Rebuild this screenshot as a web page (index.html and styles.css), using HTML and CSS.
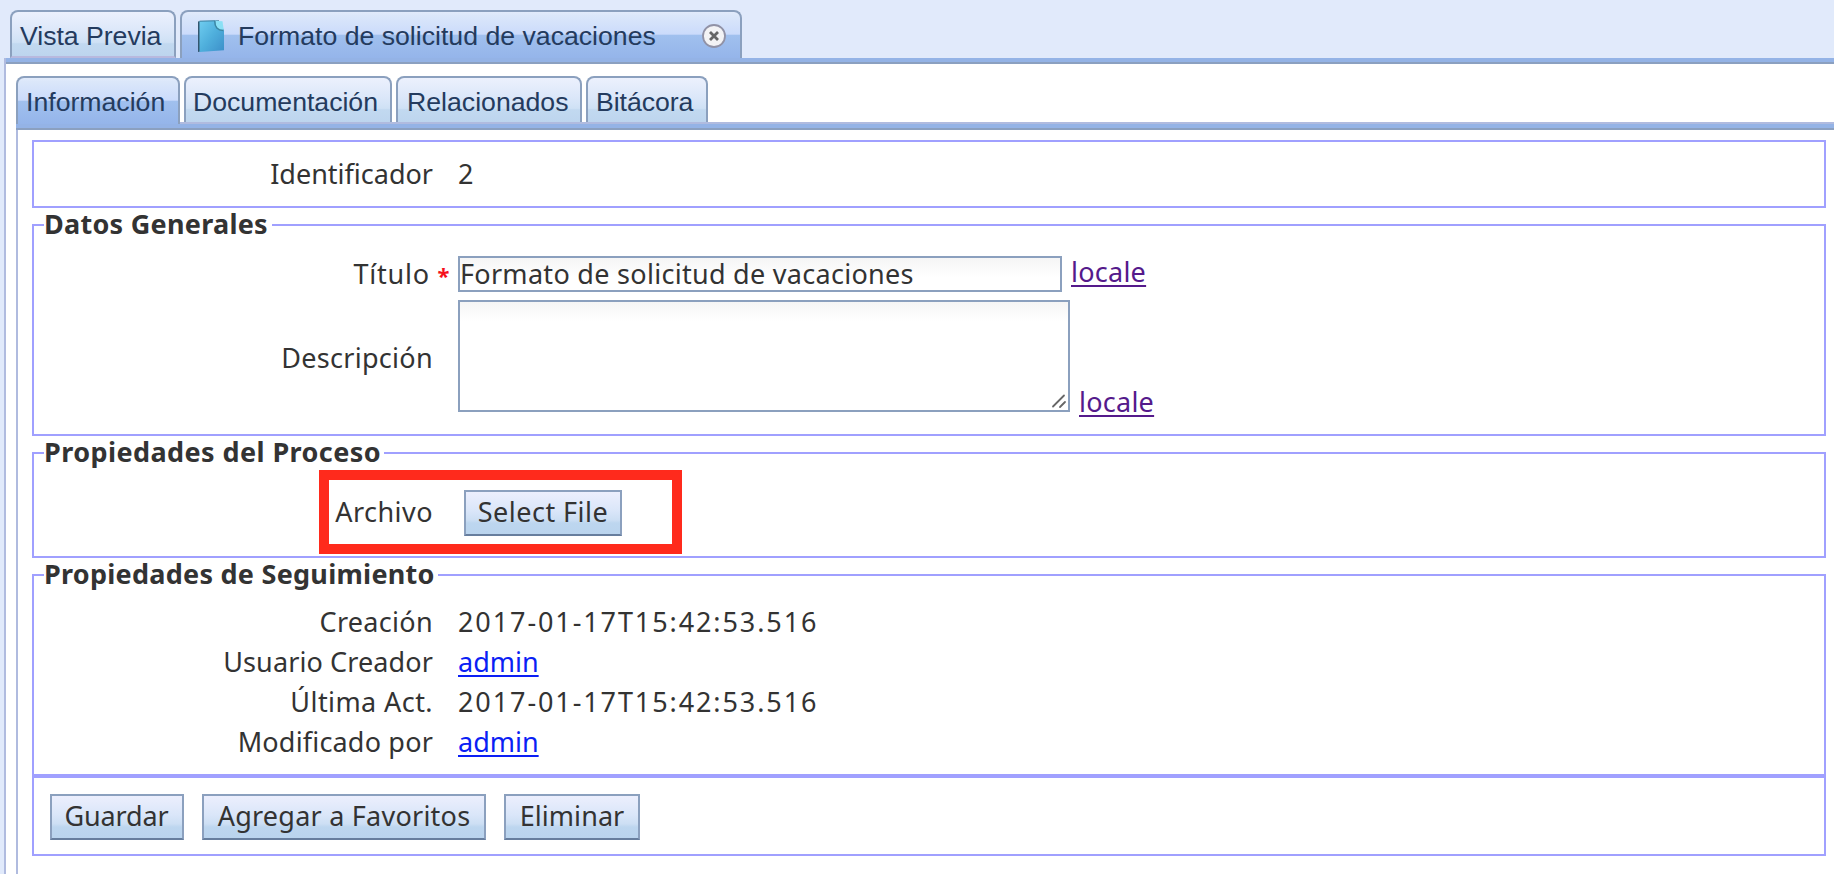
FILE: index.html
```html
<!DOCTYPE html>
<html lang="es">
<head>
<meta charset="utf-8">
<title>Formato de solicitud de vacaciones</title>
<link rel="stylesheet" href="styles.css">
</head>
<body>
<nav class="tabs tabs-outer">
  <div class="tab tab-preview"><span>Vista Previa</span></div>
  <div class="tab tab-document active">
    <svg class="doc-icon" width="28" height="34" viewBox="0 0 28 34">
      <defs><linearGradient id="page" x1="0" y1="0" x2="1" y2="1"><stop offset="0" stop-color="#6fcdf0"/><stop offset=".5" stop-color="#4fafdc"/><stop offset="1" stop-color="#3c8fc9"/></linearGradient></defs>
      <path d="M1 1.5 3.5 1 3.5 31.5 1 32Z" fill="#33566f"/>
      <path d="M2.5 1 18.500.5 27 9.500 27 30.200 2.500 32Z" fill="url(#page)"/>
      <path d="M2.500 1.200 18.500.8 22 .8" fill="none" stroke="#3f7f9f" stroke-width="1"/>
      <path d="M18 .8 25.500 1.200 26.800 10.500Q18 11 18 .8Z" fill="#8be0f5"/>
      <path d="M17.800 1Q17.500 10.300 26.500 10.500" fill="none" stroke="#3b86a3" stroke-width="1.500"/>
    </svg>
    <span>Formato de solicitud de vacaciones</span>
    <svg class="close-icon" width="26" height="26" viewBox="0 0 26 26">
      <circle cx="13" cy="13" r="11" fill="#f3f3f5" stroke="#9192a6" stroke-width="1.800"/>
      <path d="M9 9 17 17M17 9 9 17" stroke="#666" stroke-width="2.800"/>
    </svg>
  </div>
</nav>
<main class="outer-panel">
  <nav class="tabs tabs-inner">
    <div class="tab tab-info active"><span>Información</span></div>
    <div class="tab tab-docs"><span>Documentación</span></div>
    <div class="tab tab-related"><span>Relacionados</span></div>
    <div class="tab tab-log"><span>Bitácora</span></div>
  </nav>
  <form class="inner-panel">
    <fieldset class="box-id">
      <div class="row"><label>Identificador</label><span>2</span></div>
    </fieldset>
    <fieldset class="box-general">
      <legend class="lg-general">Datos Generales</legend>
      <div class="row row-title">
        <label class="required">Título<b>*</b></label>
        <input type="text" value="Formato de solicitud de vacaciones">
        <a class="visited" href="#">locale</a>
      </div>
      <div class="row row-desc">
        <label class="lb-desc">Descripción</label>
        <div class="area-wrap"><textarea></textarea>
          <svg class="grip" width="16" height="16" viewBox="0 0 16 16"><path d="M2 13.500 13 2.500M9 14 14 9" stroke="#666" stroke-width="1.800" stroke-linecap="round"/></svg>
        </div>
        <a class="visited" href="#">locale</a>
      </div>
    </fieldset>
    <fieldset class="box-process">
      <legend class="lg-process">Propiedades del Proceso</legend>
      <div class="row row-file">
        <label class="lb-file">Archivo</label>
        <button type="button" class="btn-file">Select File</button>
      </div>
      <div class="highlight"></div>
    </fieldset>
    <fieldset class="box-tracking">
      <legend class="lg-tracking">Propiedades de Seguimiento</legend>
      <div class="row"><label class="lb-created">Creación</label><span class="date">2017-01-17T15:42:53.516</span></div>
      <div class="row"><label class="lb-creator">Usuario Creador</label><a href="#">admin</a></div>
      <div class="row"><label class="lb-updated">Última Act.</label><span class="date">2017-01-17T15:42:53.516</span></div>
      <div class="row"><label class="lb-modifier">Modificado por</label><a href="#">admin</a></div>
    </fieldset>
    <fieldset class="box-actions">
      <button type="button" class="btn-save">Guardar</button>
      <button type="button" class="btn-fav">Agregar a Favoritos</button>
      <button type="button" class="btn-del">Eliminar</button>
    </fieldset>
  </form>
</main>
</body>
</html>
```
FILE: styles.css
```css
* { box-sizing: border-box; }
html, body { height: 100%; }
body {
  margin: 0;
  display: flex;
  flex-direction: column;
  overflow: hidden;
  background: #e1eafb;
  color: #333;
  font: 27px/40px "Noto Sans", sans-serif;
}

/* Tabs */
.tabs { display: flex; flex: none; align-items: flex-start; gap: 4px; }
.tabs-outer { height: 58px; padding: 10px 0 0 10px; }
.tabs-inner {
  height: 54px;
  margin-top: 12px;
  margin-left: 10px;
  background: linear-gradient(#b0bbdf, #b0bbdf) 0 46px / 100% 2px no-repeat,
    linear-gradient(#94b3e6, #94b3e6) 0 48px / 100% 4px no-repeat,
    linear-gradient(#8ba0c0, #8ba0c0) 0 52px / 100% 2px no-repeat;
}
.tab {
  display: flex;
  height: 48px;
  border: 2px solid #8ba0be;
  border-bottom: 2px solid #b8b9de;
  border-radius: 8px 8px 0 0;
  background: linear-gradient(#ecf1fd 0%, #dbe7f9 45%, #cfe1f5 69%, #c2d9f0 72%, #bdd5ee 100%);
  color: #243b5e;
  font: 26.67px/48px "Liberation Sans", Arial, sans-serif;
  white-space: nowrap;
  padding-left: 9px;
}
.tab.active {
  border-bottom: 0;
  background: linear-gradient(#e2ebfb 0%, #dbe7fa 8%, #cbdbfb 48%, #a0c0ee 51%, #95b5ea 100%);
}
.tabs-inner .tab { line-height: 49px; }
.tabs-inner .tab:not(.active) { border-bottom: 0; height: 46px; }
.tab-preview { width: 166px; padding-left: 8px; letter-spacing: -.03px; }
.tab-document { width: 562px; padding-left: 15px; }
.doc-icon { flex: none; margin: 8px 13px 0 0; }
.close-icon { margin: 11px 0 0 45px; flex: none; }
.tab-info { width: 164px; padding-left: 8px; }
.tab-docs { width: 208px; padding-left: 7px; letter-spacing: -.02px; }
.tab-related { width: 186px; padding-left: 9px; }
.tab-log { width: 122px; padding-left: 8px; letter-spacing: -.05px; }

/* Panels */
.outer-panel {
  flex: 1;
  margin-left: 4px;
  border-left: 2px solid #b0bbdf;
  background: linear-gradient(#94b3e6 4px, #8ba0c0 4px, #8ba0c0 6px, #fff 6px);
  padding-top: 6px;
  display: flex;
  flex-direction: column;
}
.inner-panel {
  flex: 1;
  margin-left: 10px;
  border-left: 2px solid #b0bbdf;
  padding: 10px 8px 0 14px;
}

/* Groups */
fieldset { min-width: 0; margin: 0; padding: 0; border: 2px solid #a0a0ff; }
legend {
  height: 32px;
  margin-left: 10px;
  padding: 0;
  font-weight: bold;
  line-height: 29px;
  white-space: nowrap;
}
.box-id { height: 68px; padding-top: 12px; }
.box-general { margin-top: 1px; height: 227px; padding-top: 15px; }
.box-process { margin-top: 1px; height: 121px; padding-top: 21px; position: relative; }
.box-tracking { margin-top: 1px; height: 217px; padding-top: 11px; }
.box-actions { height: 80px; padding: 16px; display: flex; gap: 18px; }
.lg-general { width: 228px; letter-spacing: .27px; }
.lg-process { width: 340px; letter-spacing: .42px; }
.lg-tracking { width: 394px; letter-spacing: .26px; }

/* Rows */
.row { display: flex; height: 40px; align-items: center; white-space: nowrap; }
.row label { flex: none; width: 424px; padding-right: 25px; text-align: right; }
.row label.required { padding-right: 8px; letter-spacing: .8px; }
.required b { display: inline-block; width: 13px; margin-left: 7px; color: #f5101c; font-size: 22px; line-height: 30px; letter-spacing: 0; text-align: center; }
.row-title { height: 36px; }
.row-desc { height: 112px; margin-top: 8px; }
.row-file { height: 46px; }
.row .lb-desc { letter-spacing: .3px; padding-top: 3px; }
.lb-file { letter-spacing: .45px; }
.lb-created { letter-spacing: .31px; }
.lb-creator { letter-spacing: .11px; }
.lb-updated { letter-spacing: .42px; }
.lb-modifier { letter-spacing: .18px; }
.date { letter-spacing: 1.9px; }
.row-file label { line-height: 37px; margin-top: -3px; }

a { color: #0b1ff5; text-decoration-thickness: 2px; text-underline-offset: 3px; text-decoration-skip-ink: none; }
a.visited { color: #551a8b; letter-spacing: .25px; margin-left: 9px; }
.row-title .visited { margin-top: -4px; }
.row-desc .visited { align-self: flex-end; line-height: 21px; }

input, textarea {
  display: block;
  margin: 0;
  border: 2px solid #8ba0be;
  border-radius: 0;
  background: linear-gradient(#f5f5f5, #fff 20px) #fff;
  color: #333;
  font: inherit;
  outline: 0;
}
input { width: 604px; height: 36px; padding: 0; letter-spacing: .29px; }
textarea { width: 612px; height: 112px; resize: none; }
.area-wrap { position: relative; }
.grip { position: absolute; right: 3px; bottom: 3px; fill: none; }

/* Buttons */
button {
  height: 46px;
  margin: 0;
  border: 2px solid #8ba0be;
  border-bottom-color: #677e9e;
  padding: 0 0 3px;
  background: linear-gradient(#eceffd 0%, #dae6f9 45%, #cddff4 66%, #bdd6ef 74%, #bad4ee 100%);
  color: #333;
  font: inherit;
  line-height: 39px;
  white-space: nowrap;
}
.btn-file { width: 158px; margin-left: 6px; letter-spacing: .47px; }
.btn-save { width: 134px; padding-right: 1px; letter-spacing: -.14px; }
.btn-fav { width: 284px; letter-spacing: .24px; }
.btn-del { width: 136px; letter-spacing: .07px; }

/* Marker frame drawn over the file row */
.highlight {
  position: absolute;
  left: 285px;
  top: 1px;
  width: 363px;
  height: 84px;
  border: 10px solid #ff2a1c;
  pointer-events: none;
}
```
